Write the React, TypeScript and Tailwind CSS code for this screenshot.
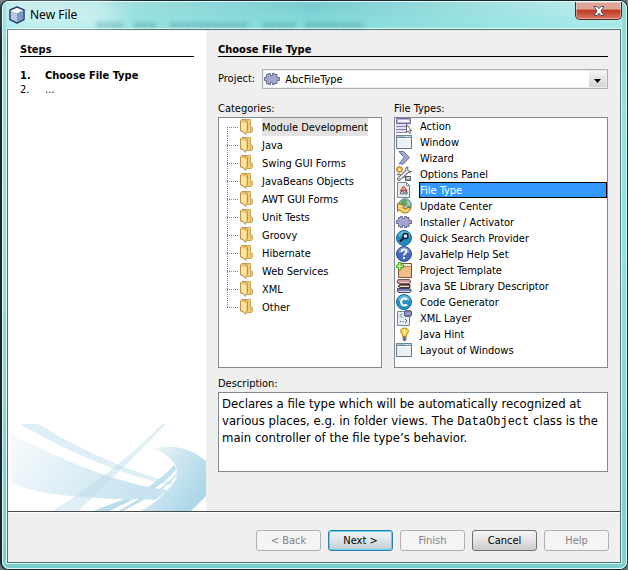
import { useState, type ReactNode } from 'react';

const categories = [
    'Module Development',
    'Java',
    'Swing GUI Forms',
    'JavaBeans Objects',
    'AWT GUI Forms',
    'Unit Tests',
    'Groovy',
    'Hibernate',
    'Web Services',
    'XML',
    'Other',
];

const icons: Record<string, ReactNode> = {
    action: (
        <>
            <path d="M.5.5h14v5H.5z" fill="#b9b6dc" stroke="#6e6aa6" />
            <path d="M2 2h11v2H2z" fill="#f4f3fb" />
            <path d="M0 6h14v8H0z" fill="#e3e1f3" />
            <path d="M0 8.5h11M0 11.500h10M0 14.500h10" stroke="#8582bb" />
            <path d="M10.5 6.5v8l1.500-1.500 1.500 2.500 1.300-.8-1.300-2.200h2z" fill="#fff" stroke="#444" strokeWidth=".8" />
        </>
    ),
    window: (
        <>
            <path d="M.5 1.500h15v13H.5z" fill="#eef1f3" stroke="#647581" />
            <path d="M0 1h16v3H0z" fill="#68879b" />
            <path d="M1 2h14v1H1z" fill="#a4c2d3" />
            <path d="M9 2h1v1H9zM11 2h1v1h-1zM13 2h1v1h-1z" fill="#fff" />
            <path d="M1 4h14v1H1z" fill="#fff" />
        </>
    ),
    wizard: <path d="M3 1.500h4.500l6 6-6 6.500H3l5-6.500z" fill="#a3a5d2" stroke="#6c6f9f" strokeLinejoin="round" />,
    options: (
        <>
            <path d="M1 8.500c3-1 4 0 5 2l5 .5" fill="none" stroke="#697780" strokeWidth="1.600" />
            <path d="M3 13 11 5.500" stroke="#5e6970" strokeWidth="4" strokeLinecap="round" />
            <path d="M10.500 1a3 3 0 1 0 5 4.500l-2.500 0-1.500-1.500.5-2.800z" fill="#eef1f3" stroke="#5e6970" />
            <path d="M3 13 11 5.500" stroke="#eef1f3" strokeWidth="2.200" strokeLinecap="round" />
            <circle cx="3" cy="13" r=".7" fill="#5e6970" />
            <circle cx="3.500" cy="3.500" r="2.300" fill="#fff3c9" stroke="#d79b26" strokeWidth="1.800" />
            <circle cx="3.500" cy="3.500" r="3.100" fill="none" stroke="#a8721a" strokeWidth=".7" strokeDasharray="1 1" />
            <path d="M9.500 10.500h5v4h-5z" fill="#a7b0b6" stroke="#4e5a61" />
            <path d="M11 12h3" stroke="#e8ecee" />
        </>
    ),
    file: (
        <>
            <path d="M1.500.5h9l3 3v12h-12z" fill="#e3ebf0" stroke="#6f8796" />
            <path d="M10.500.5v3h3z" fill="#fff" stroke="#6f8796" />
            <path d="M7.500 4 11 8.500H4.500z" fill="#e39a94" stroke="#b9463e" />
            <path d="M4.500 9.500h3v2.500h-3z" fill="#c3ccd2" stroke="#6c7a84" />
            <circle cx="10" cy="10.800" r="1.400" fill="#9ba7ae" stroke="#626e76" />
        </>
    ),
    update: (
        <>
            <circle cx="9" cy="7" r="6.300" fill="#9cc6de" stroke="#527f9d" />
            <path d="M5 3c2-2 5-2 7-1l-2 2 2 2-3 2-3-1-2 1zM11 8l4-1-1 4-2 1z" fill="#64a55a" />
            <path
                d="M1.500 5.500v8l2-1.500c2.500 3.500 7.500 4 10 1l1.500-4-4 1c-1.500 1.300-2.800 1-4-.5L9 7.500z"
                fill="#f4cf65"
                stroke="#9a6b12"
                strokeLinejoin="round"
            />
            <path d="m3 7.500 3-.5-2 2z" fill="#fff2bb" />
        </>
    ),
    puzzle: (
        <path
            d="M2.500 3.500h2v-1h2v2h2v-2h2v1H13v3h2.500v3H13v3h-2.500v1h-2v-2h-2v2h-2v-1h-2v-3h-2v-3h2z"
            fill="#a2a6cc"
            stroke="#696d93"
            strokeLinejoin="round"
        />
    ),
    search: (
        <>
            <circle cx="8" cy="8" r="7.500" fill="#2588bd" stroke="#136892" />
            <path d="M2 7a6 6 0 0 1 12 0c-4-2-8-2-12 0z" fill="#5fb2da" />
            <circle cx="9.500" cy="6" r="2.500" fill="#d9edf7" stroke="#101820" strokeWidth="1.300" />
            <path d="M7.500 8 4 11.500" stroke="#101820" strokeWidth="2" />
        </>
    ),
    help: (
        <>
            <circle cx="8" cy="8" r="7.500" fill="#4568bd" stroke="#2f4d96" />
            <path d="M2 7a6 6 0 0 1 12 0c-4-1-8-1-12 0z" fill="#7190d7" />
            <path d="M5.500 6c0-3.500 5-3.500 5-.5 0 2-2.500 1.800-2.500 4M8 11v2" fill="none" stroke="#fff" strokeWidth="1.800" />
        </>
    ),
    template: (
        <>
            <path d="M2.500 1.500h13v14h-13z" fill="#efbd87" stroke="#84532a" />
            <path d="M3 2h12v2H3z" fill="#fbe9d2" />
            <path d="M3 4h12v1H3z" fill="#c98a4f" />
            <path d="M2.500.5H5V3h2.500v2.500H5V8H2.500V5.500H.5V3h2z" fill="#c6f593" stroke="#36a31b" />
        </>
    ),
    books: (
        <>
            <path d="M2 1.500h11l1.500 1v2L13 5.500H2l-1-2z" fill="#c79a9a" stroke="#7b5050" />
            <path d="M4 6.500h10v3H4l-2-1.500z" fill="#7b6e5e" stroke="#47382c" />
            <path d="M4 8.500h9" stroke="#e6e0d6" />
            <path d="M1.500 10.500h12l1.500 1v2l-1.500 1h-11l-1-1.500z" fill="#7b82ad" stroke="#3f456c" />
            <path d="M3 13.500h11" stroke="#d5d8ea" />
            <path d="M4 4.500h9" stroke="#ecd9d9" />
        </>
    ),
    code: (
        <>
            <circle cx="8" cy="8" r="7.500" fill="#2391c3" stroke="#126e98" />
            <path d="M2 7a6 6 0 0 1 12 0c-4-1-8-1-12 0z" fill="#5bb6dc" />
            <path d="M11 5.500a3.500 3.500 0 1 0 0 5" fill="none" stroke="#fff" strokeWidth="2.200" />
        </>
    ),
    xml: (
        <>
            <path d="M1.500 1.500h12v14h-12z" fill="#e4edf3" stroke="#6e8798" />
            <path d="M6 3.500 4 5.500l2 2M9 9l2 2-2 2" fill="none" stroke="#53646f" />
            <path d="M4 11.500h1M6.500 11.500h1" stroke="#53646f" />
            <path d="M8.500 1.500h1v-1h2v1h1v-1h2v1h1v4h-1v1h-2v-1h-1v1h-2v-1h-1z" fill="#8e93bf" stroke="#4c5179" />
        </>
    ),
    hint: (
        <>
            <path d="M8.500 2C3.500 2 4 7 6.500 8.500v2h4v-2C13 7 13.500 2 8.500 2z" fill="#f8cf51" stroke="#bf8618" />
            <path d="M7 4c1-1 2-1 3 0l-.5 4h-2z" fill="#fff3b0" />
            <path d="M7 11.500h3v2H7z" fill="#a4a4ac" stroke="#5d5d66" />
            <path d="M7.500 14.500h2" stroke="#444" />
        </>
    ),
};

const fileTypes = [
    { name: 'Action', icon: 'action' },
    { name: 'Window', icon: 'window' },
    { name: 'Wizard', icon: 'wizard' },
    { name: 'Options Panel', icon: 'options' },
    { name: 'File Type', icon: 'file' },
    { name: 'Update Center', icon: 'update' },
    { name: 'Installer / Activator', icon: 'puzzle' },
    { name: 'Quick Search Provider', icon: 'search' },
    { name: 'JavaHelp Help Set', icon: 'help' },
    { name: 'Project Template', icon: 'template' },
    { name: 'Java SE Library Descriptor', icon: 'books' },
    { name: 'Code Generator', icon: 'code' },
    { name: 'XML Layer', icon: 'xml' },
    { name: 'Java Hint', icon: 'hint' },
    { name: 'Layout of Windows', icon: 'window' },
];

function Icon({ name }: { name: string }) {
    return (
        <svg viewBox="0 0 16 16" className="size-4 shrink-0" aria-hidden="true">
            {icons[name]}
        </svg>
    );
}

function Folder() {
    return (
        <svg viewBox="0 0 14 16" className="h-4 w-3.5 shrink-0" aria-hidden="true">
            <path d="M4.500.5h6v7l2 1v4l-1 1h-7z" fill="#f0cf79" stroke="#cfa75a" />
            <path d="M10.500 8v5" stroke="#d9b365" />
            <path d="M.5 2 2 .5h3l2.500 2v9l-1.500 1-.5 3-2-2.500-3-1z" fill="#e6bd66" stroke="#bb9147" />
            <path d="m1 2.500 5.500 1.500v8l-1 .5v2l-2-2.500L1 11z" fill="#fae5a0" />
        </svg>
    );
}

// Dotted branch in front of a tree row
function Branch({ first, last }: { first: boolean; last: boolean }) {
    return (
        <svg viewBox="0 0 13 18" className="h-[18px] w-[13px] shrink-0" aria-hidden="true">
            <path d={`M.5 ${first ? 9 : 0}V${last ? 10 : 18}`} stroke="#808080" strokeDasharray="1 1" />
            <path d="M0 9.500h11" stroke="#808080" strokeDasharray="1 1" />
        </svg>
    );
}

function Swoosh() {
    return (
        <svg viewBox="24 42 594 261" className="mt-auto block w-full" aria-hidden="true">
            <defs>
                <linearGradient id="wing" x1="0" y1="0" x2="1" y2="0.3">
                    <stop offset="0" stopColor="#f8fcfd" />
                    <stop offset="1" stopColor="#c6e3ef" />
                </linearGradient>
                <linearGradient id="curl" x1="0" y1="0" x2="1" y2="0.7">
                    <stop offset="0.1" stopColor="#f1f8fb" />
                    <stop offset="0.45" stopColor="#cfe7f1" />
                    <stop offset="1" stopColor="#a9d6e8" />
                </linearGradient>
            </defs>
            <path d="M32 68C150 132 330 218 502 240L466 269C300 268 100 258 32 216z" fill="url(#wing)" />
            <path d="M60 42h55c100 60 240 135 405 175l-8 9C340 188 190 118 60 42z" fill="#cae5f0" fillOpacity=".6" />
            <path d="M487 42h11C410 135 320 222 235 303h-77C290 220 400 130 487 42z" fill="#b7dbe9" fillOpacity=".45" />
            <path d="M458 116c70-16 120 4 160 37v105l-45 45H420c40-18 62-42 82-63 28-25 35-48 24-75-17-27-37-40-68-49z" fill="url(#curl)" />
            <path d="M524 165c-25 25-55 50-85 70l20 3c30-18 55-40 69-60zM531 186c-15 22-32 36-53 52h8c20-14 36-30 45-45z" fill="#c1e1ed" />
            <path d="M372 268h29l-72 35h-50zM416 268h18l-66 35h-12z" fill="#b9ddeb" />
        </svg>
    );
}

function Heading({ children }: { children: ReactNode }) {
    return <h2 className="border-b border-black pt-px text-[11px] leading-[13px] font-bold">{children}</h2>;
}

function FooterButton({ label, disabled = false, primary = false }: { label: string; disabled?: boolean; primary?: boolean }) {
    let look = 'border-[#707070] bg-linear-to-b from-[#f4f4f4] via-[#e4e4e4] to-[#cacaca] text-black';
    if (disabled) look = 'border-[#adb2b5] bg-[#f4f4f4] text-[#838383]';
    if (primary) look = 'border-[#2f7fae] bg-linear-to-b from-[#eff3f5] via-[#dce5ea] to-[#bccbd4] text-black inset-ring inset-ring-[#5fd0f5]';
    return (
        <button type="button" disabled={disabled} className={`h-[21px] w-[65px] rounded-[3px] border ${look}`}>
            {label}
        </button>
    );
}

export default function App() {
    const [category, setCategory] = useState('Module Development');
    const [fileType, setFileType] = useState('File Type');

    return (
        <div className="flex min-h-screen bg-[#69777a] font-['DejaVu_Sans_Condensed','Noto_Sans',sans-serif] text-[11px] leading-[14px] text-black">
            <div className="flex flex-1 flex-col rounded-lg border border-l-2 border-[#15282c] bg-[#8de0dd]">
                <div className="flex flex-1 flex-col rounded-[7px] border border-[#e2fafa] bg-linear-to-b from-[#93d9da] from-5% via-[#8ee6e4] via-35% to-[#7bcfce] pr-1 pb-1 pl-[3px]">
                    {/* Title bar */}
                    <header className="relative flex h-[26px] items-start justify-between">
                        <div className="absolute inset-0 bg-linear-to-r from-[#b7e9e8] via-[#78cbcf] via-50% to-[#c5efef]" />
                        <div className="absolute inset-0 bg-linear-to-b from-transparent to-[#8ce8e5]/60" />
                        <div className="absolute top-0 left-0 h-7 w-28 rounded-full bg-white/55 blur-md" />
                        <svg viewBox="0 0 300 8" className="absolute bottom-0 left-[86px] h-2 w-[300px] blur-[2px]" aria-hidden="true">
                            <path d="M5 5h25M43 5h22M79 5h78M171 5h32M214 5h58" stroke="#286b78" strokeOpacity=".45" strokeWidth="4" strokeDasharray="5 2" />
                        </svg>
                        <div className="relative flex items-center gap-[5px] pt-[4px] pl-[3px]">
                            <svg viewBox="0 0 16 18" className="h-[18px] w-4" aria-hidden="true">
                                <path d="m8 1 7 3v9.500L8 17l-7-3.500V4z" fill="#dce7f3" stroke="#293b6c" strokeWidth="1.500" strokeLinejoin="round" />
                                <path d="m2 4.500 6 2.500V16l-6-3z" fill="#b3c9e4" />
                                <path d="M14 4.500 8 7v9l6-3z" fill="#7d9bc8" />
                                <path d="M8 2 2 4.500 8 7l6-2.500z" fill="#f8fbfe" />
                            </svg>
                            <h1 className="font-['Noto_Sans',sans-serif] text-xs">New File</h1>
                        </div>
                        <button
                            type="button"
                            aria-label="Close"
                            className="relative flex h-[18px] w-[47px] items-center justify-center rounded-b-[5px] border border-t-0 border-[#5b2424] bg-linear-to-b from-[#dda397] from-40% via-[#bd3a23] via-50% to-[#d77459] inset-ring inset-ring-white/40"
                        >
                            <svg viewBox="0 0 12 10" className="h-2.5 w-3" aria-hidden="true">
                                <path d="M1 .5h3l2 2.200L8 .5h3L8 5l3 4.500H8L6 7.300 4 9.500H1L4 5z" fill="#fff" stroke="#4b5266" strokeLinejoin="round" />
                            </svg>
                        </button>
                    </header>

                    <div className="flex flex-1 flex-col border border-[#e2fafa]">
                        <div className="flex flex-1 flex-col border border-[#4a7370] bg-[#efefef]">
                            <div className="flex flex-1">
                                {/* Steps */}
                                <aside className="flex w-[198px] shrink-0 flex-col bg-white">
                                    <div className="flex flex-col gap-3 px-3 pt-3">
                                        <Heading>Steps</Heading>
                                        <ol>
                                            <li className="flex font-bold">
                                                <span className="w-[25px]">1.</span>Choose File Type
                                            </li>
                                            <li className="flex">
                                                <span className="w-[25px]">2.</span>...
                                            </li>
                                        </ol>
                                    </div>
                                    <Swoosh />
                                </aside>

                                {/* Choose File Type */}
                                <main className="flex flex-1 flex-col px-3 pt-3">
                                    <Heading>Choose File Type</Heading>
                                    <div className="mt-3 flex items-center gap-[7px]">
                                        <label htmlFor="project">Project:</label>
                                        <div className="relative flex-1">
                                            <select
                                                id="project"
                                                className="block h-5 w-full appearance-none border border-[#abadb3] bg-white pt-px pl-[22px] inset-ring inset-ring-[#ededed]"
                                            >
                                                <option>AbcFileType</option>
                                            </select>
                                            <div className="pointer-events-none absolute top-0.5 left-0.5">
                                                <Icon name="puzzle" />
                                            </div>
                                            <div className="pointer-events-none absolute inset-y-0.5 right-0.5 flex w-[17px] items-center justify-center bg-linear-to-b from-[#f4f4f4] to-[#d4d4d4]">
                                                <svg viewBox="0 0 7 4" className="mt-1 h-1 w-[7px]" aria-hidden="true">
                                                    <path d="M0 0h7L3.500 4z" />
                                                </svg>
                                            </div>
                                        </div>
                                    </div>

                                    <div className="mt-[13px] flex flex-1 gap-3">
                                        <section className="flex w-[164px] flex-col gap-px">
                                            <h3 id="categories">Categories:</h3>
                                            <ul aria-labelledby="categories" className="flex-1 border border-[#828790] bg-white pl-2">
                                                {categories.map((name, i) => (
                                                    <li key={name} className="flex items-center">
                                                        <Branch first={i === 0} last={i === categories.length - 1} />
                                                        <Folder />
                                                        <button
                                                            type="button"
                                                            onClick={() => setCategory(name)}
                                                            className={`ml-2 h-[18px] pt-0.5 whitespace-nowrap ${name === category ? 'bg-[#e3e3e3]' : ''}`}
                                                        >
                                                            {name}
                                                        </button>
                                                    </li>
                                                ))}
                                            </ul>
                                        </section>

                                        <section className="flex flex-1 flex-col gap-px">
                                            <h3 id="file-types">File Types:</h3>
                                            <ul aria-labelledby="file-types" className="flex-1 border border-[#828790] bg-white pl-px">
                                                {fileTypes.map(({ name, icon }) => (
                                                    <li key={name} className="flex items-center gap-[7px]">
                                                        <Icon name={icon} />
                                                        <button
                                                            type="button"
                                                            onClick={() => setFileType(name)}
                                                            className={`h-4 flex-1 border pt-px text-left leading-[13px] ${name === fileType ? 'border-black bg-[#3399ff] text-white' : 'border-transparent'}`}
                                                        >
                                                            {name}
                                                        </button>
                                                    </li>
                                                ))}
                                            </ul>
                                        </section>
                                    </div>

                                    <h3 className="mt-[9px]">Description:</h3>
                                    <div className="mt-px mb-[39px] h-20 border border-[#828790] bg-white px-[3px] pt-0.5 text-[13px] leading-[17px]">
                                        Declares a file type which will be automatically recognized at various places, e.g. in folder views. The{' '}
                                        <code className="font-['Liberation_Mono',monospace] text-xs leading-none">DataObject</code> class is the main controller of the file
                                        type’s behavior.
                                    </div>
                                </main>
                            </div>

                            {/* Buttons */}
                            <footer className="flex justify-end gap-[7px] border-t border-[#4a4a4a] pt-[18px] pr-[11px] pb-[11px] inset-shadow-[0_1px_white]">
                                <FooterButton label="&lt; Back" disabled />
                                <FooterButton label="Next &gt;" primary />
                                <FooterButton label="Finish" disabled />
                                <FooterButton label="Cancel" />
                                <FooterButton label="Help" disabled />
                            </footer>
                        </div>
                    </div>
                </div>
            </div>
        </div>
    );
}
